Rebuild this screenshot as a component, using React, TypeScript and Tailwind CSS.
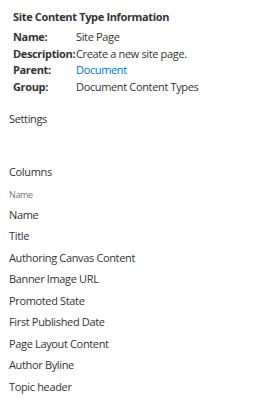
import React from "react";

const info = [
  { label: "Name:", value: "Site Page" },
  { label: "Description:", value: "Create a new site page." },
  { label: "Parent:", value: "Document", link: true },
  { label: "Group:", value: "Document Content Types" },
];

const columns = [
  "Name",
  "Title",
  "Authoring Canvas Content",
  "Banner Image URL",
  "Promoted State",
  "First Published Date",
  "Page Layout Content",
  "Author Byline",
  "Topic header",
];

export default function App() {
  return (
    <div
      className="w-[277px] h-[399px] bg-white text-[#333] overflow-hidden tracking-[-0.35px]"
      style={{ fontFamily: '"Open Sans", "Noto Sans", sans-serif' }}
    >
      <div className="pl-[13px] pt-[9px]">
        <h2 className="text-[11px] font-bold leading-[16px] h-[20px]">
          Site Content Type Information
        </h2>
        <div className="grid grid-cols-[63px_1fr] text-[11px] leading-[16.7px]">
          {info.map((row) => (
            <React.Fragment key={row.label}>
              <div className="font-bold">{row.label}</div>
              <div className={row.link ? "text-[#0072c6]" : ""}>{row.value}</div>
            </React.Fragment>
          ))}
        </div>
      </div>
      <div className="pl-[9px] mt-[15px] text-[11px] leading-[16px]">Settings</div>
      <div className="pl-[9px] mt-[37px] text-[11px] leading-[16px]">Columns</div>
      <div className="pl-[9px] mt-[8px] text-[9px] leading-[14px] text-[#777]">Name</div>
      <ul className="pl-[9px] mt-[2px] text-[11px]">
        {columns.map((c) => (
          <li key={c} className="h-[21.5px] leading-[21.5px]">
            {c}
          </li>
        ))}
      </ul>
    </div>
  );
}
